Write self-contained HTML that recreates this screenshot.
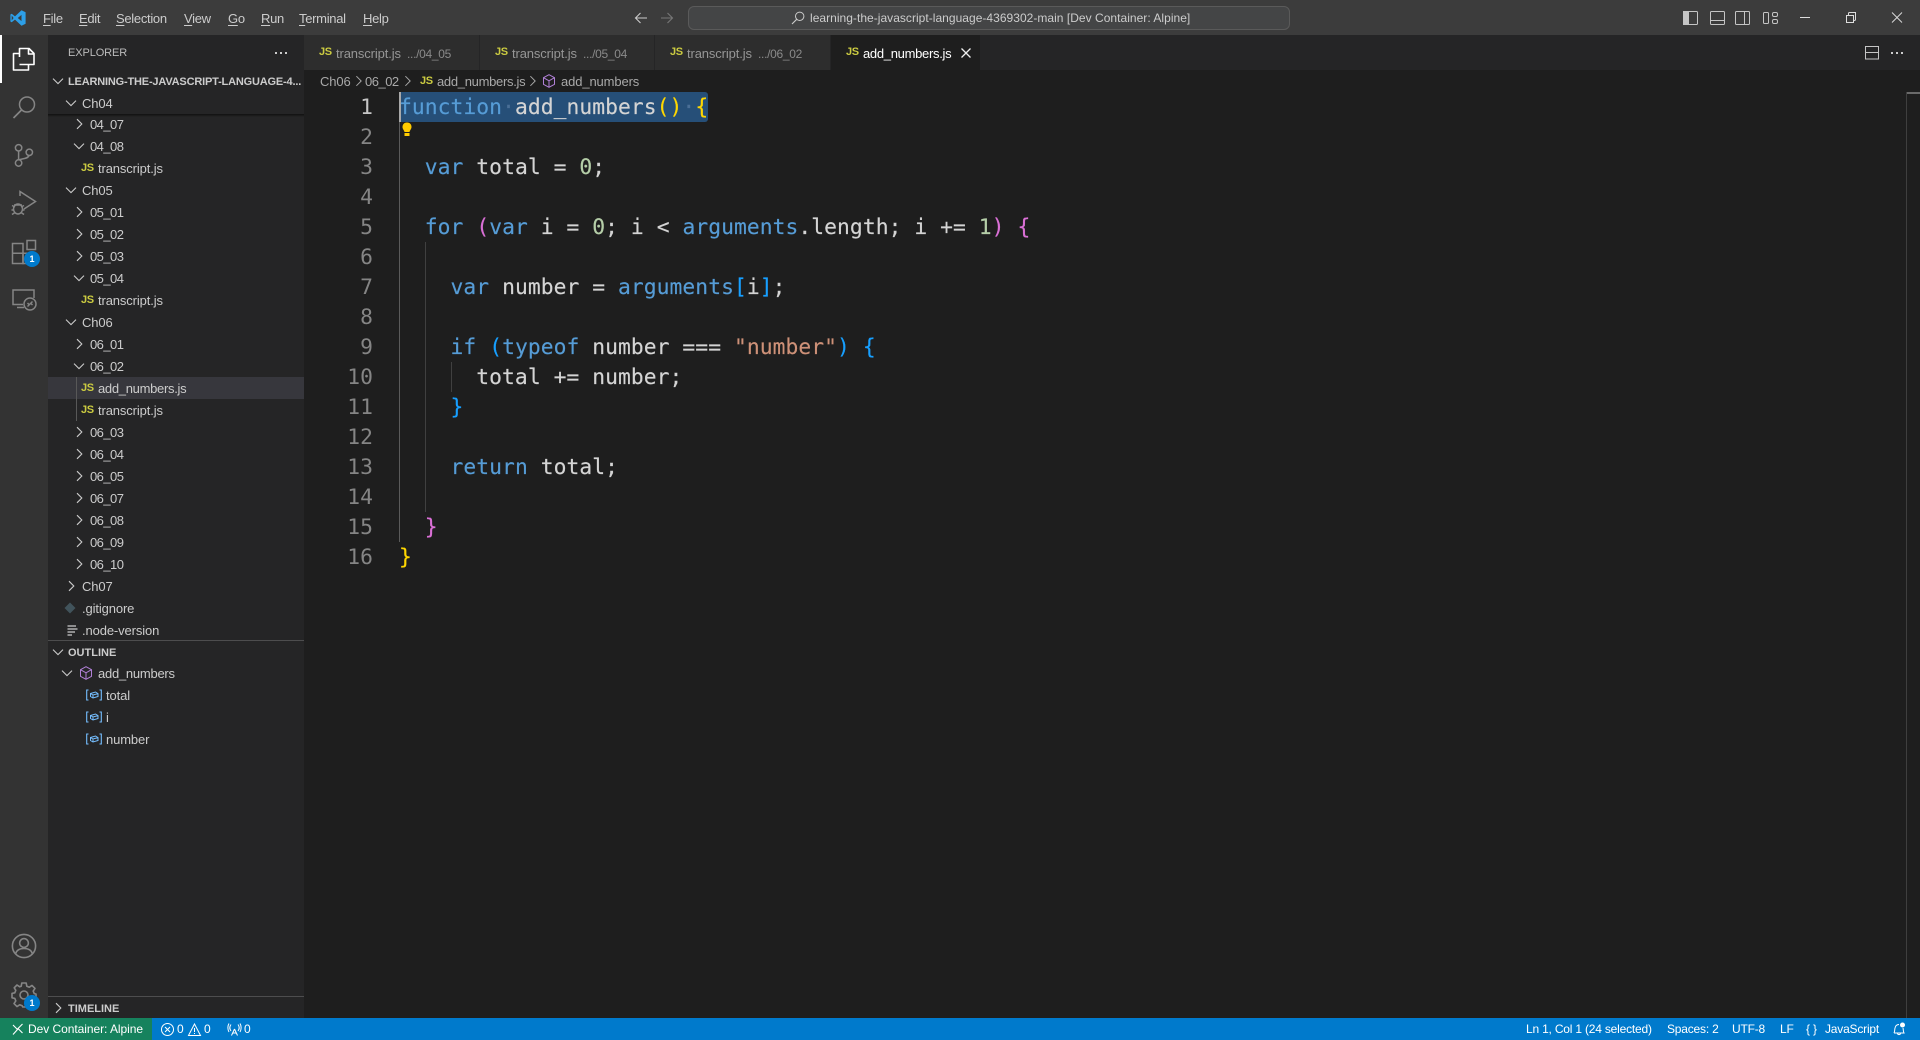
<!DOCTYPE html>
<html><head><meta charset="utf-8"><title>add_numbers.js</title>
<style>
*{box-sizing:border-box}
html,body{margin:0;padding:0;width:1920px;height:1040px;overflow:hidden;background:#1e1e1e}
body{position:relative;font-family:"Liberation Sans",sans-serif;font-size:13px;color:#ccc;letter-spacing:-.3px}
.a{position:absolute;white-space:pre}
svg{position:absolute;overflow:visible;fill:none}
.m{top:8px;line-height:21px;color:#ccc}
u{text-decoration-thickness:1px;text-underline-offset:2px}
.t{position:absolute;height:22px;line-height:22px;white-space:pre;color:#ccc;margin-top:1px;letter-spacing:-.12px}
.t.f{letter-spacing:-.55px}
.t.o{margin-top:0}
.t.n1{letter-spacing:-.3px}
.js{position:absolute;font-weight:700;font-size:11px;color:#cbcb41;letter-spacing:-.4px;white-space:pre}
.t.h{font-weight:700;font-size:11px;letter-spacing:-.18px;color:#ccc}
.t.h2{letter-spacing:0}
.tab{position:absolute;top:35px;height:35px;background:#2d2d2d;border-right:1px solid #252526}
.d{color:#969696;letter-spacing:-.12px}.d2{font-size:12px;color:#8a8a8a}
.s{position:absolute;top:1018px;height:22px;line-height:23px;color:#fff;font-size:12px;white-space:pre;letter-spacing:-.14px}
#code div{position:absolute;height:30px;line-height:32px;white-space:pre;left:399px;font-family:"DejaVu Sans Mono","Liberation Mono",monospace;font-size:21.3px;letter-spacing:.06px;-webkit-text-stroke:.15px currentColor;color:#d4d4d4}
#nums div{position:absolute;height:30px;line-height:32px;right:1547px;width:50px;text-align:right;font-family:"DejaVu Sans Mono","Liberation Mono",monospace;font-size:21.3px;letter-spacing:.06px;color:#858585}
.k{color:#569cd6}.n{color:#b5cea8}.y{color:#ffd700}.p{color:#da70d6}.b{color:#179fff}.r{color:#ce9178}.w{color:#4a6f96}
.g{position:absolute;width:1px;background:#404040}
</style></head><body>
<svg width="0" height="0" style="position:absolute"><defs>
<symbol id="cr" viewBox="0 0 16 16"><path d="M6 3.200L10.800 8L6 12.800" stroke="#ccc" stroke-width="1.100" fill="none"/></symbol>
<symbol id="cd" viewBox="0 0 16 16"><path d="M3 5.600L8 10.600L13 5.600" stroke="#ccc" stroke-width="1.100" fill="none"/></symbol>
<symbol id="v" viewBox="0 0 16 12"><path d="M2.500 1H.7V11H2.500M13.500 1H15.300V11H13.500" stroke="#75beff" stroke-width="1.100" fill="none"/><path d="M4.500 4.500L9.500 3L12 4.600V7.500L7 9L4.500 7.500ZM4.500 4.500L7 6L12 4.600M7 6V9" stroke="#75beff" stroke-width="1" fill="none"/></symbol>
</defs></svg>

<!-- title bar -->
<div class="a" style="left:0;top:0;width:1920px;height:35px;background:#3c3c3c"></div>
<svg style="left:10px;top:10px" width="16" height="16" viewBox="0 0 16 16"><path d="M11.500 .3L15.600 2.200V13.800L11.500 15.700L5 9.600L1.700 12.200L.4 11.500V4.500L1.700 3.800L5 6.400ZM11.500 4.900L7.800 8L11.500 11.100Z" fill="#2d9fe8" fill-rule="evenodd"/><path d="M1.700 5.500L3.600 8L1.700 10.500Z" fill="#3c3c3c"/></svg>
<div class="a m" style="left:43px"><u>F</u>ile</div>
<div class="a m" style="left:79px"><u>E</u>dit</div>
<div class="a m" style="left:116px"><u>S</u>election</div>
<div class="a m" style="left:184px"><u>V</u>iew</div>
<div class="a m" style="left:228px"><u>G</u>o</div>
<div class="a m" style="left:261px"><u>R</u>un</div>
<div class="a m" style="left:299px"><u>T</u>erminal</div>
<div class="a m" style="left:363px"><u>H</u>elp</div>
<svg style="left:634px;top:11px" width="14" height="14" viewBox="0 0 14 14"><path d="M13 7H1.500M6.500 2L1.500 7L6.500 12" stroke="#ccc" stroke-width="1.100"/></svg>
<svg style="left:660px;top:11px" width="14" height="14" viewBox="0 0 14 14"><path d="M1 7H12.500M7.500 2L12.500 7L7.500 12" stroke="#777" stroke-width="1.100"/></svg>
<div class="a" style="left:688px;top:6px;width:602px;height:24px;background:#444546;border:1px solid #5a5a5a;border-radius:6px"></div>
<svg style="left:791px;top:11px" width="14" height="14" viewBox="0 0 14 14"><circle cx="8.700" cy="5.300" r="4.200" stroke="#ccc" stroke-width="1"/><path d="M5.700 8.300L1 13" stroke="#ccc" stroke-width="1.100"/></svg>
<div class="a" style="left:810px;top:8px;line-height:21px;font-size:12px;color:#ccc;letter-spacing:.03px">learning-the-javascript-language-4369302-main [Dev Container: Alpine]</div>
<svg style="left:1683px;top:11px" width="15" height="14" viewBox="0 0 15 14"><rect x=".5" y=".5" width="14" height="13" stroke="#c5c5c5" rx="1"/><rect x="0" y="0" width="6" height="14" fill="#c5c5c5"/></svg>
<svg style="left:1710px;top:11px" width="15" height="14" viewBox="0 0 15 14"><rect x=".5" y=".5" width="14" height="13" stroke="#c5c5c5" rx="1"/><path d="M.5 9.500H14.500" stroke="#c5c5c5"/></svg>
<svg style="left:1735px;top:11px" width="15" height="14" viewBox="0 0 15 14"><rect x=".5" y=".5" width="14" height="13" stroke="#c5c5c5" rx="1"/><path d="M9.500 .5V13.500" stroke="#c5c5c5"/></svg>
<svg style="left:1763px;top:11px" width="15" height="14" viewBox="0 0 15 14"><rect x=".5" y="1.500" width="5" height="11" stroke="#c5c5c5" rx="1"/><rect x="9.500" y="1.500" width="5" height="4" stroke="#c5c5c5" rx="1.500"/><rect x="9.500" y="8.500" width="5" height="4" stroke="#c5c5c5" rx="1.500"/></svg>
<svg style="left:1800px;top:17px" width="10" height="1"><rect width="10" height="1" fill="#ddd"/></svg>
<svg style="left:1846px;top:12px" width="10" height="11" viewBox="0 0 10 11"><path d="M.5 3.500H7.500V10.500H.5ZM2.500 3.500V1.500Q2.500 .5 3.500 .5H9.500V7.500Q9.500 8.500 8 8.500H7.500" stroke="#ddd"/></svg>
<svg style="left:1892px;top:12px" width="10" height="11" viewBox="0 0 10 11"><path d="M0 .5L10 10.500M10 .5L0 10.500" stroke="#ddd" stroke-width=".9"/></svg>

<!-- activity bar -->
<div class="a" style="left:0;top:35px;width:48px;height:983px;background:#333"></div>
<div class="a" style="left:0;top:35px;width:2px;height:48px;background:#fff"></div>
<svg style="left:0;top:35px" width="48" height="48"><path d="M19.500 22V13.500H29L34 18.500V29.500H19.500M28.500 13.500V19H34M19.500 18.500H13.500V35H28.500V29.500" stroke="#fff" stroke-width="1.600" stroke-linejoin="round"/></svg>
<svg style="left:0;top:83px" width="48" height="48"><circle cx="27" cy="21.500" r="7.500" stroke="#858585" stroke-width="1.500"/><path d="M21.500 27L13.500 35" stroke="#858585" stroke-width="1.700"/></svg>
<svg style="left:0;top:131px" width="48" height="48"><g stroke="#858585" stroke-width="1.500"><circle cx="18.600" cy="16.800" r="3.200"/><circle cx="18.600" cy="32" r="3.200"/><circle cx="29.300" cy="21.300" r="3.200"/><path d="M18.600 20V28.800M29 24.500C28 28 22 27.500 19.300 28.800"/></g></svg>
<svg style="left:0;top:179px" width="48" height="48"><g stroke="#858585" stroke-width="1.500"><path d="M20 17V12.500L35.500 22.500L24 30"/><ellipse cx="18" cy="30" rx="4.500" ry="5"/><path d="M12 26.500L15 28M24 26.500L21 28M11.500 31H14M24.500 31H22M12 35.500L15 33.500M24 35.500L21 33.500M14 26H22"/></g></svg>
<svg style="left:0;top:227px" width="48" height="48"><g stroke="#858585" stroke-width="1.500"><rect x="12.500" y="16.500" width="10.500" height="20"/><path d="M12.500 26.300H32V30"/><path d="M23 26.300V36.500H28"/><rect x="27" y="13.500" width="8.500" height="9"/></g></svg>
<div class="a" style="left:24px;top:251px;width:16px;height:16px;border-radius:8px;background:#007acc;color:#fff;font:700 9px/16px 'Liberation Sans',sans-serif;text-align:center;letter-spacing:0">1</div>
<svg style="left:0;top:275px" width="48" height="48"><g stroke="#858585" stroke-width="1.500"><path d="M23 29.500H13V15H34V23"/><path d="M17 32.500H24"/><circle cx="30" cy="29" r="6"/><path d="M27.500 31.500L32.500 26.500M27.500 28L29 29.500M31 28.500L32.500 30"/></g></svg>
<svg style="left:0;top:922px" width="48" height="48"><g stroke="#858585" stroke-width="1.600"><circle cx="24" cy="24" r="11.600"/><circle cx="24" cy="21" r="4.400"/><path d="M15.500 32C16.500 28 20 26.500 24 26.500S31.500 28 32.500 32"/></g></svg>
<svg style="left:0;top:970px" width="48" height="48"><g stroke="#858585" stroke-width="1.600" stroke-linejoin="round"><path d="M21.800 13H26.200L26.800 16.200L29.300 17.200L32 15.400L35 18.400L33.200 21.100L34.200 23.600L36 24V28.400L33.200 29L32.200 31.500L33.800 34L31 36.800L28.300 35L25.800 36L25.200 37H22.800L22.200 35.800L19.700 34.800L17 36.600L14 33.600L15.800 30.900L14.800 28.400L12 27.800V23.400L14.800 22.800L15.800 20.300L14.200 17.800L17 15L19.700 16.800L21.200 16.200Z"/><circle cx="24" cy="25" r="4"/></g></svg>
<div class="a" style="left:24px;top:995px;width:16px;height:16px;border-radius:8px;background:#007acc;color:#fff;font:700 9px/16px 'Liberation Sans',sans-serif;text-align:center;letter-spacing:0">1</div>

<!-- sidebar -->
<div class="a" style="left:48px;top:35px;width:256px;height:983px;background:#252526"></div>
<div class="a" style="left:68px;top:43px;line-height:21px;font-size:11px;letter-spacing:-.1px;color:#bbb">EXPLORER</div>
<svg style="left:274px;top:51px" width="14" height="4"><g fill="#ccc"><rect x="1" y="1" width="2" height="2"/><rect x="6" y="1" width="2" height="2"/><rect x="11" y="1" width="2" height="2"/></g></svg>
<div class="a" style="left:48px;top:114px;width:256px;height:3px;background:linear-gradient(#111,#252526)"></div>

<svg style="left:50px;top:73px" width="16" height="16"><use href="#cd"/></svg>
<div class="t h" style="left:68px;top:70px">LEARNING-THE-JAVASCRIPT-LANGUAGE-4...</div>
<svg style="left:63px;top:95px" width="16" height="16"><use href="#cd"/></svg>
<div class="t" style="left:82px;top:92px">Ch04</div>
<svg style="left:71px;top:116px" width="16" height="16"><use href="#cr"/></svg>
<div class="t f" style="left:90px;top:113px">04_07</div>
<svg style="left:71px;top:138px" width="16" height="16"><use href="#cd"/></svg>
<div class="t f" style="left:90px;top:135px">04_08</div>
<div class="js" style="left:81px;top:162px">JS</div>
<div class="t" style="left:98px;top:157px">transcript.js</div>
<svg style="left:63px;top:182px" width="16" height="16"><use href="#cd"/></svg>
<div class="t" style="left:82px;top:179px">Ch05</div>
<svg style="left:71px;top:204px" width="16" height="16"><use href="#cr"/></svg>
<div class="t f" style="left:90px;top:201px">05_01</div>
<svg style="left:71px;top:226px" width="16" height="16"><use href="#cr"/></svg>
<div class="t f" style="left:90px;top:223px">05_02</div>
<svg style="left:71px;top:248px" width="16" height="16"><use href="#cr"/></svg>
<div class="t f" style="left:90px;top:245px">05_03</div>
<svg style="left:71px;top:270px" width="16" height="16"><use href="#cd"/></svg>
<div class="t f" style="left:90px;top:267px">05_04</div>
<div class="js" style="left:81px;top:294px">JS</div>
<div class="t" style="left:98px;top:289px">transcript.js</div>
<svg style="left:63px;top:314px" width="16" height="16"><use href="#cd"/></svg>
<div class="t" style="left:82px;top:311px">Ch06</div>
<svg style="left:71px;top:336px" width="16" height="16"><use href="#cr"/></svg>
<div class="t f" style="left:90px;top:333px">06_01</div>
<svg style="left:71px;top:358px" width="16" height="16"><use href="#cd"/></svg>
<div class="t f" style="left:90px;top:355px">06_02</div>
<div class="a" style="left:48px;top:377px;width:256px;height:22px;background:#37373d"></div>
<div class="a" style="left:76px;top:377px;width:1px;height:44px;background:#585858"></div>
<div class="js" style="left:81px;top:382px">JS</div>
<div class="t n1" style="left:98px;top:377px">add_numbers.js</div>
<div class="js" style="left:81px;top:404px">JS</div>
<div class="t" style="left:98px;top:399px">transcript.js</div>
<svg style="left:71px;top:424px" width="16" height="16"><use href="#cr"/></svg>
<div class="t f" style="left:90px;top:421px">06_03</div>
<svg style="left:71px;top:446px" width="16" height="16"><use href="#cr"/></svg>
<div class="t f" style="left:90px;top:443px">06_04</div>
<svg style="left:71px;top:468px" width="16" height="16"><use href="#cr"/></svg>
<div class="t f" style="left:90px;top:465px">06_05</div>
<svg style="left:71px;top:490px" width="16" height="16"><use href="#cr"/></svg>
<div class="t f" style="left:90px;top:487px">06_07</div>
<svg style="left:71px;top:512px" width="16" height="16"><use href="#cr"/></svg>
<div class="t f" style="left:90px;top:509px">06_08</div>
<svg style="left:71px;top:534px" width="16" height="16"><use href="#cr"/></svg>
<div class="t f" style="left:90px;top:531px">06_09</div>
<svg style="left:71px;top:556px" width="16" height="16"><use href="#cr"/></svg>
<div class="t f" style="left:90px;top:553px">06_10</div>
<svg style="left:63px;top:578px" width="16" height="16"><use href="#cr"/></svg>
<div class="t" style="left:82px;top:575px">Ch07</div>
<svg style="left:64px;top:602px" width="12" height="12" viewBox="0 0 12 12"><path d="M6 .5L11.500 6L6 11.500L.5 6Z" fill="#41535b"/></svg>
<div class="t" style="left:82px;top:597px">.gitignore</div>
<svg style="left:67px;top:625px" width="11" height="11" viewBox="0 0 11 11"><path d="M.5 1H9M.5 4H10.500M.5 7H8M.5 10H5" stroke="#ccc" stroke-width="1.300"/></svg>
<div class="t" style="left:82px;top:619px">.node-version</div>

<div class="a" style="left:48px;top:640px;width:256px;height:1px;background:#4d4d4e"></div>
<svg style="left:50px;top:644px" width="16" height="16"><use href="#cd"/></svg>
<div class="t h h2" style="left:68px;top:641px">OUTLINE</div>
<svg style="left:59px;top:665px" width="16" height="16"><use href="#cd"/></svg>
<svg style="left:80px;top:666px" width="12" height="14" viewBox="0 0 12 14"><path d="M6 .7L11.500 3.700V10.300L6 13.300L.5 10.300V3.700ZM.5 3.700L6 6.800L11.500 3.700M6 6.800V13.300" stroke="#b180d7" stroke-width="1"/></svg>
<div class="t o" style="left:98px;top:663px;letter-spacing:-.25px">add_numbers</div>
<svg style="left:86px;top:689px" width="16" height="12"><use href="#v"/></svg>
<div class="t o" style="left:106px;top:685px">total</div>
<svg style="left:86px;top:711px" width="16" height="12"><use href="#v"/></svg>
<div class="t o" style="left:106px;top:707px">i</div>
<svg style="left:86px;top:733px" width="16" height="12"><use href="#v"/></svg>
<div class="t o" style="left:106px;top:729px">number</div>
<div class="a" style="left:48px;top:996px;width:256px;height:1px;background:#4d4d4e"></div>
<svg style="left:50px;top:1000px" width="16" height="16"><use href="#cr"/></svg>
<div class="t h h2" style="left:68px;top:997px">TIMELINE</div>

<!-- tab bar -->
<div class="a" style="left:304px;top:35px;width:1616px;height:35px;background:#252526"></div>
<div class="tab" style="left:304px;width:176px"></div>
<div class="tab" style="left:480px;width:175px"></div>
<div class="tab" style="left:655px;width:176px"></div>
<div class="a" style="left:831px;top:35px;width:149px;height:35px;background:#1e1e1e"></div>
<div class="js" style="left:319px;top:46px">JS</div><div class="a d" style="left:336px;top:43px;line-height:21px">transcript.js</div><div class="a d2" style="left:407px;top:44px;line-height:21px">.../04_05</div>
<div class="js" style="left:495px;top:46px">JS</div><div class="a d" style="left:512px;top:43px;line-height:21px">transcript.js</div><div class="a d2" style="left:583px;top:44px;line-height:21px">.../05_04</div>
<div class="js" style="left:670px;top:46px">JS</div><div class="a d" style="left:687px;top:43px;line-height:21px">transcript.js</div><div class="a d2" style="left:758px;top:44px;line-height:21px">.../06_02</div>
<div class="js" style="left:846px;top:46px">JS</div><div class="a" style="left:863px;top:43px;line-height:21px;color:#fff">add_numbers.js</div>
<svg style="left:961px;top:48px" width="10" height="10"><path d="M.5 .5L9.500 9.500M9.500 .5L.5 9.500" stroke="#eee" stroke-width="1.300"/></svg>
<svg style="left:1865px;top:46px" width="14" height="14" viewBox="0 0 14 14"><rect x=".5" y=".5" width="13" height="12.500" stroke="#c5c5c5"/><path d="M.5 6.500H13.500" stroke="#c5c5c5"/></svg>
<svg style="left:1891px;top:52px" width="14" height="3"><g fill="#ccc"><rect x="0" y="0" width="2" height="2"/><rect x="5" y="0" width="2" height="2"/><rect x="10" y="0" width="2" height="2"/></g></svg>

<!-- breadcrumb -->
<div class="a d" style="left:320px;top:71px;line-height:21px;color:#a9a9a9">Ch06</div>
<svg style="left:352px;top:74px" width="14" height="14" viewBox="0 0 16 16"><path d="M5 2.500L10.500 8L5 13.500" stroke="#a9a9a9" stroke-width="1.100"/></svg>
<div class="a d" style="left:365px;top:71px;line-height:21px;color:#a9a9a9;letter-spacing:-.5px">06_02</div>
<svg style="left:401px;top:74px" width="14" height="14" viewBox="0 0 16 16"><path d="M5 2.500L10.500 8L5 13.500" stroke="#a9a9a9" stroke-width="1.100"/></svg>
<div class="js" style="left:420px;top:75px">JS</div>
<div class="a d" style="left:437px;top:71px;line-height:21px;color:#a9a9a9;letter-spacing:-.3px">add_numbers.js</div>
<svg style="left:526px;top:74px" width="14" height="14" viewBox="0 0 16 16"><path d="M5 2.500L10.500 8L5 13.500" stroke="#a9a9a9" stroke-width="1.100"/></svg>
<svg style="left:543px;top:74px" width="12" height="14" viewBox="0 0 12 14"><path d="M6 .7L11.500 3.700V10.300L6 13.300L.5 10.300V3.700ZM.5 3.700L6 6.800L11.500 3.700M6 6.800V13.300" stroke="#b180d7" stroke-width="1"/></svg>
<div class="a d" style="left:561px;top:71px;line-height:21px;color:#a9a9a9">add_numbers</div>

<!-- editor -->
<div class="a" style="left:399px;top:92px;width:309px;height:30px;background:#264f78;border-radius:0 3px 3px 0"></div>
<div class="a" style="left:399px;top:92px;width:2px;height:30px;background:#a9a9a9"></div>
<div class="g" style="left:399px;top:122px;height:420px;background:#5a5a5a"></div>
<div class="g" style="left:425px;top:242px;height:270px"></div>
<div class="g" style="left:451px;top:362px;height:30px"></div>
<svg style="left:401px;top:122px" width="12" height="16" viewBox="0 0 12 16"><path d="M6 .5C9 .5 10.500 2.500 10.500 5C10.500 7 9 8 8.500 10H3.500C3 8 1.500 7 1.500 5C1.500 2.500 3 .5 6 .5Z" fill="#ffcc00"/><rect x="3.500" y="11" width="5" height="3" fill="#ffcc00"/></svg>

<div id="nums">
<div style="top:92px;color:#c6c6c6">1</div><div style="top:122px">2</div><div style="top:152px">3</div><div style="top:182px">4</div><div style="top:212px">5</div><div style="top:242px">6</div><div style="top:272px">7</div><div style="top:302px">8</div><div style="top:332px">9</div><div style="top:362px">10</div><div style="top:392px">11</div><div style="top:422px">12</div><div style="top:452px">13</div><div style="top:482px">14</div><div style="top:512px">15</div><div style="top:542px">16</div>
</div>
<div id="code">
<div style="top:92px"><span class="k">function</span><span class="w">·</span>add_numbers<span class="y">()</span><span class="w">·</span><span class="y">{</span></div>
<div style="top:152px">  <span class="k">var</span> total = <span class="n">0</span>;</div>
<div style="top:212px">  <span class="k">for</span> <span class="p">(</span><span class="k">var</span> i = <span class="n">0</span>; i &lt; <span class="k">arguments</span>.length; i += <span class="n">1</span><span class="p">)</span> <span class="p">{</span></div>
<div style="top:272px">    <span class="k">var</span> number = <span class="k">arguments</span><span class="b">[</span>i<span class="b">]</span>;</div>
<div style="top:332px">    <span class="k">if</span> <span class="b">(</span><span class="k">typeof</span> number === <span class="r">"number"</span><span class="b">)</span> <span class="b">{</span></div>
<div style="top:362px">      total += number;</div>
<div style="top:392px">    <span class="b">}</span></div>
<div style="top:452px">    <span class="k">return</span> total;</div>
<div style="top:512px">  <span class="p">}</span></div>
<div style="top:542px"><span class="y">}</span></div>
</div>

<!-- overview ruler -->
<div class="a" style="left:1906px;top:92px;width:1px;height:926px;background:#3f3f3f"></div>
<div class="a" style="left:1907px;top:92px;width:13px;height:2px;background:#6a6a6a"></div>

<!-- status bar -->
<div class="a" style="left:0;top:1018px;width:1920px;height:22px;background:#007acc"></div>
<div class="a" style="left:0;top:1018px;width:152px;height:22px;background:#16825d"></div>
<svg style="left:12px;top:1023px" width="11" height="12" viewBox="0 0 11 12"><path d="M1 11L5.500 6L1 1.500M10.500 .5L6 5L10.500 9.500" stroke="#fff" stroke-width="1.100" transform="translate(0 .5)"/></svg>
<div class="s" style="left:28px;letter-spacing:-.05px">Dev Container: Alpine</div>
<svg style="left:161px;top:1023px" width="13" height="13" viewBox="0 0 13 13"><circle cx="6.500" cy="6.500" r="6" stroke="#fff"/><path d="M4 4L9 9M9 4L4 9" stroke="#fff"/></svg>
<div class="s" style="left:177px">0</div>
<svg style="left:188px;top:1023px" width="13" height="13" viewBox="0 0 13 13"><path d="M6.500 1L12.500 12.500H.5Z" stroke="#fff"/><path d="M6.500 5V9M6.500 10V11" stroke="#fff"/></svg>
<div class="s" style="left:204px">0</div>
<svg style="left:228px;top:1023px" width="13" height="13" viewBox="0 0 13 13"><path d="M6.500 6L3.500 12.500M6.500 6L9.500 12.500M4.500 10H8.500M3 1.500C1.500 3.500 1.500 6 3 8M10 1.500C11.500 3.500 11.500 6 10 8M1 .5C-.5 3 -.5 6.500 1 9M12 .5C13.500 3 13.500 6.500 12 9" stroke="#fff"/></svg>
<div class="s" style="left:244px">0</div>
<div class="s" style="left:1526px;letter-spacing:-.2px">Ln 1, Col 1 (24 selected)</div>
<div class="s" style="left:1667px;letter-spacing:-.2px">Spaces: 2</div>
<div class="s" style="left:1732px;letter-spacing:-.2px">UTF-8</div>
<div class="s" style="left:1780px">LF</div>
<div class="s" style="left:1806px;letter-spacing:3px">{}</div>
<div class="s" style="left:1825px;letter-spacing:-.2px">JavaScript</div>
<svg style="left:1892px;top:1022px" width="14" height="14" viewBox="0 0 14 14"><path d="M2 11C3 9 2.500 8 3 6C3.500 3.500 5 2.500 7 2.500M11 6C11.500 8 11 9 12 11H2M5.500 11.500C5.800 13 8.200 13 8.500 11.500" stroke="#fff"/><circle cx="10.500" cy="3" r="2.500" fill="#fff"/></svg>
</body></html>
